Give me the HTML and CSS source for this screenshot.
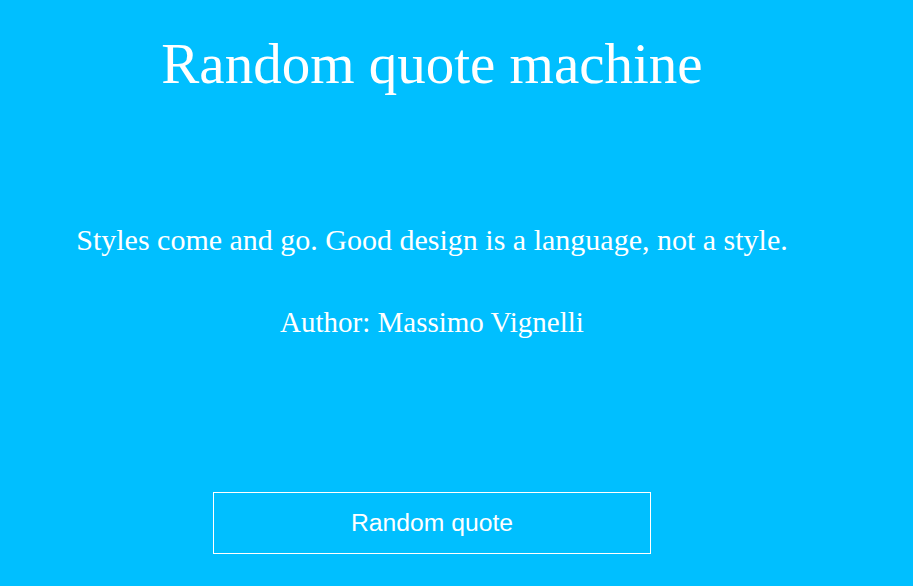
FILE: index.html
```html
<!DOCTYPE html>
<html>
<head>
<meta charset="utf-8">
<title>Random quote machine</title>
<link rel="stylesheet" href="styles.css">
</head>
<body>
<main class="machine">
  <h1 class="title">Random quote machine</h1>
  <section class="quote-box">
    <p class="quote-text">Styles come and go. Good design is a language, not a style.</p>
    <p class="quote-author">Author: Massimo Vignelli</p>
  </section>
  <button class="new-quote" type="button">Random quote</button>
</main>
</body>
</html>
```
FILE: styles.css
```css
html, body {
  margin: 0;
  padding: 0;
  background: #00bfff;
  height: 100%;
}
body {
  color: #ffffff;
  font-family: "Liberation Serif", "Times New Roman", serif;
}
.machine {
  width: 864px;
  display: flex;
  flex-direction: column;
  align-items: center;
}
.title {
  margin: 26px 0 0;
  font-size: 57px;
  font-weight: normal;
  line-height: 76px;
}
.quote-box {
  margin-top: 118px;
  display: flex;
  flex-direction: column;
  align-items: center;
}
.quote-text {
  margin: 0;
  font-size: 30px;
  line-height: 40px;
}
.quote-author {
  margin: 42px 0 0;
  font-size: 29px;
  line-height: 40px;
}
.new-quote {
  margin-top: 150px;
  width: 438px;
  height: 62px;
  background: transparent;
  border: 1px solid #ffffff;
  color: #ffffff;
  font-family: "Liberation Sans", Arial, sans-serif;
  font-size: 24.7px;
  padding: 0;
  cursor: pointer;
}
```
